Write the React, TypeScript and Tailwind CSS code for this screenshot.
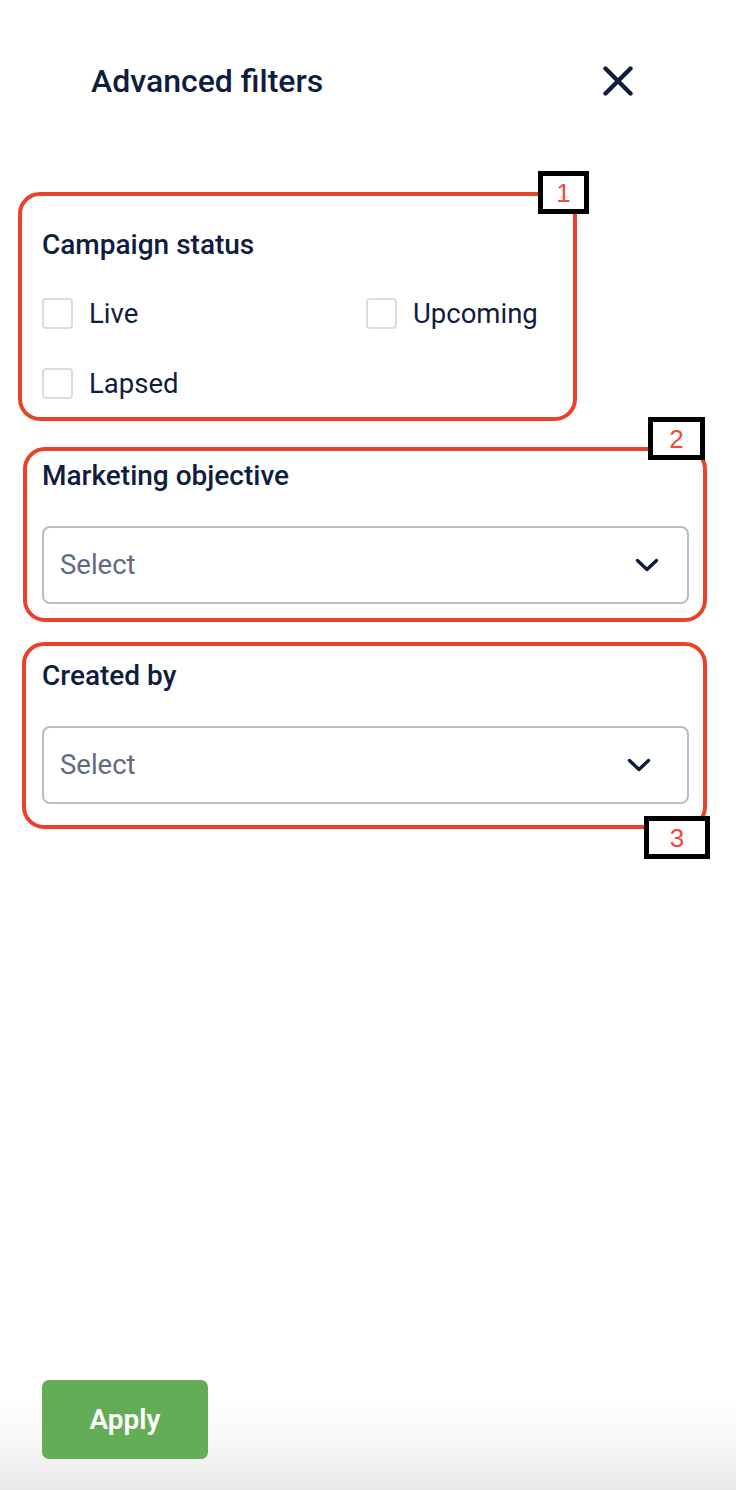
import type { ReactNode } from "react";

const font = { fontFamily: "Roboto, 'Liberation Sans', sans-serif" };

function Marker({ n, className }: { n: string; className: string }) {
  return (
    <div
      className={`absolute flex items-center justify-center border-[5px] border-black bg-white text-[26px] leading-none text-[#ef4a3b] ${className}`}
      style={{ fontFamily: "'Liberation Sans', Arial, sans-serif" }}
    >
      {n}
    </div>
  );
}

function Checkbox({ label }: { label: string }) {
  return (
    <label className="flex h-[31px] items-center gap-[16px]">
      <span className="h-[31px] w-[31px] rounded-[4px] border-2 border-[#dcdcdc] bg-white" />
      <span className="text-[27.5px] leading-[32px] text-[#0f1d3f]">{label}</span>
    </label>
  );
}

function SelectBox({ chevronRight }: { chevronRight: string }) {
  return (
    <div
      className={`flex h-[78px] items-center justify-between rounded-[8px] border-2 border-[#b9bdc8] bg-white pl-[16px] ${chevronRight}`}
    >
      <span className="text-[27.5px] leading-[32px] text-[#5f6a84]">Select</span>
      <svg width="24" height="15" viewBox="0 0 24 15" fill="none">
        <path
          d="M2.5 2.5 L12 11.5 L21.5 2.5"
          stroke="#0f1d3f"
          strokeWidth="3.4"
          strokeLinecap="round"
          strokeLinejoin="round"
        />
      </svg>
    </div>
  );
}

function Section({ className, children }: { className: string; children: ReactNode }) {
  return (
    <section className={`relative rounded-[22px] border-[4px] border-[#e8432a] ${className}`}>
      {children}
    </section>
  );
}

function SectionTitle({ children }: { children: ReactNode }) {
  return <h3 className="text-[28px] font-medium leading-[32px] text-[#0f1d3f]">{children}</h3>;
}

export default function App() {
  return (
    <div className="flex h-[1490px] w-[736px] flex-col bg-white" style={font}>
      <header className="flex items-center justify-between pl-[91px] pr-[103px] pt-[61px]">
        <h2 className="text-[32px] font-medium leading-[40px] text-[#0f1d3f]">Advanced filters</h2>
        <button aria-label="Close">
          <svg width="30" height="30" viewBox="0 0 30 30" fill="none">
            <path
              d="M2.5 2.5 L27.5 27.5 M27.5 2.5 L2.5 27.5"
              stroke="#0f1d3f"
              strokeWidth="4.4"
              strokeLinecap="round"
            />
          </svg>
        </button>
      </header>

      <Section className="ml-[18px] mt-[91px] w-[559px] pb-[18px] pl-[20px] pt-[33px]">
        <Marker n="1" className="left-[516px] top-[-25px] h-[43px] w-[51px]" />
        <SectionTitle>Campaign status</SectionTitle>
        <div className="mt-[37px] grid grid-cols-[324px_auto] gap-y-[39px]">
          <Checkbox label="Live" />
          <Checkbox label="Upcoming" />
          <Checkbox label="Lapsed" />
        </div>
      </Section>

      <Section className="ml-[23px] mt-[26px] w-[684px] pb-[14px] pl-[15px] pr-[14px] pt-[9px]">
        <Marker n="2" className="left-[621px] top-[-34px] h-[43px] w-[57px]" />
        <SectionTitle>Marketing objective</SectionTitle>
        <div className="mt-[34px]">
          <SelectBox chevronRight="pr-[28px]" />
        </div>
      </Section>

      <Section className="ml-[22px] mt-[20px] w-[685px] pb-[21px] pl-[16px] pr-[14px] pt-[14px]">
        <Marker n="3" className="left-[618px] top-[170px] h-[43px] w-[66px]" />
        <SectionTitle>Created by</SectionTitle>
        <div className="mt-[34px]">
          <SelectBox chevronRight="pr-[36px]" />
        </div>
      </Section>

      <footer className="mt-auto bg-[linear-gradient(to_bottom,#ffffff_0%,#ffffff_45%,#f4f4f4_80%,#e9e9e9_100%)] pb-[31px] pl-[42px] pt-[60px]">
        <button className="flex h-[79px] w-[166px] items-center justify-center rounded-[7px] bg-[#64ac55] text-[28px] font-semibold text-white">
          Apply
        </button>
      </footer>
    </div>
  );
}
